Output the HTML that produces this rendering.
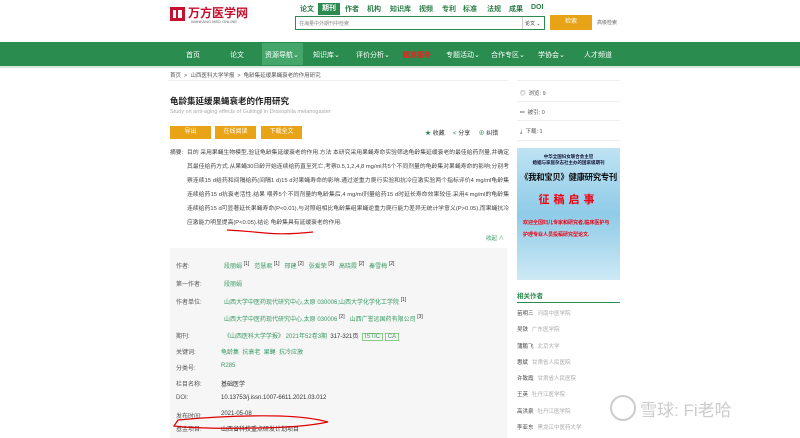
<!DOCTYPE html><html><head><meta charset="utf-8"><style>
*{margin:0;padding:0;box-sizing:border-box}
body{width:800px;height:431px;overflow:hidden;background:#fff;font-family:"Liberation Sans","Noto Sans CJK SC",sans-serif;font-size:6px;color:#333;position:relative}
.a{position:absolute;white-space:nowrap}
.g{color:#3a9a63}
.nav span{position:absolute;top:8px;color:#fff;font-size:7px}
.tab{position:absolute;top:4px;font-size:7px;font-weight:bold;color:#2a7d47}
.btn{position:absolute;top:126px;height:13px;background:#e8a317;color:#fff;font-size:6px;text-align:center;line-height:13px}
.ab{position:absolute;left:187px;width:322px;font-size:5.8px;line-height:14px;color:#444}
.lb{position:absolute;left:176px;color:#555}
.rel div{height:16.3px;line-height:16.3px;font-size:5.5px;color:#444}
.rel span{color:#aaa;margin-left:4px}
</style></head><body>
<div class="a" style="left:170px;top:7px;width:15px;height:14px;background:#c8102e"></div>
<div class="a" style="left:173px;top:10px;width:3px;height:8px;background:#fff"></div>
<div class="a" style="left:178px;top:10px;width:4px;height:8px;background:#fff"></div>
<div class="a" style="left:188px;top:4px;font-size:12px;font-weight:bold;color:#c8102e">万方医学网</div>
<div class="a" style="left:191px;top:19px;font-size:4px;color:#666">WANFANG MED ONLINE</div>
<div class="tab" style="left:300px">论文</div>
<div class="a" style="left:318px;top:3px;width:22px;height:12px;background:#2a8c4f;color:#fff;font-size:7px;font-weight:bold;text-align:center;line-height:12px">期刊</div>
<div class="tab" style="left:345px">作者</div><div class="tab" style="left:367px">机构</div><div class="tab" style="left:390px">知识库</div><div class="tab" style="left:419px">视频</div><div class="tab" style="left:442px">专利</div><div class="tab" style="left:463px">标准</div><div class="tab" style="left:487px">法规</div><div class="tab" style="left:509px">成果</div><div class="tab" style="left:531px">DOI</div>
<div class="a" style="left:295px;top:16px;width:250px;height:14px;border:1px solid #2a8c4f;font-size:5px;color:#888;padding:3px 3px">在海量中外期刊中检索</div>
<div class="a" style="left:522px;top:17px;width:22px;height:12px;border-left:1px solid #ccc;font-size:5px;padding:3px 2px">论文 ⌄</div>
<div class="a" style="left:550px;top:15px;width:42px;height:15px;background:#e8a317;color:#fff;font-size:6px;text-align:center;line-height:15px">检索</div>
<div class="a" style="left:597px;top:19px;font-size:5px;color:#666">高级检索</div>
<div class="a nav" style="left:0;top:42px;width:800px;height:24px;background:#2a8c4f">
<div class="a" style="left:262px;top:1px;width:41px;height:22px;background:#45a66c"></div>
<span style="left:186px">首页</span><span style="left:230px">论文</span><span style="left:265px">资源导航⌄</span><span style="left:313px">知识库⌄</span><span style="left:356px">评价分析⌄</span><span style="left:403px;color:#e8231f;font-weight:bold">精准服务</span><span style="left:446px">专题活动⌄</span><span style="left:491px">合作专区⌄</span><span style="left:538px">学协会⌄</span><span style="left:584px">人才频道</span>
</div>
<div class="a" style="left:0;top:66px;width:800px;height:2px;background:#d8e8dc"></div>
<div class="a" style="left:170px;top:71px;font-size:5.5px;color:#555">首页 &nbsp;&gt;&nbsp; 山西医科大学学报 &nbsp;&gt;&nbsp; 龟龄集延缓果蝇衰老的作用研究</div>
<div class="a" style="left:168px;top:80px;width:340px;height:1px;background:#eee"></div>
<div class="a" style="left:170px;top:95px;font-size:8.5px;font-weight:bold;color:#222">龟龄集延缓果蝇衰老的作用研究</div>
<div class="a" style="left:170px;top:109px;font-size:5.5px;color:#aaa">Study on anti-aging effects of Guilingji in Drosophila melanogaster</div>
<div class="btn" style="left:170px;width:41px">导出</div><div class="btn" style="left:215px;width:41px">在线阅读</div><div class="btn" style="left:261px;width:41px">下载全文</div>
<div class="a" style="left:425px;top:128px;font-size:6px"><span style="color:#2a8c4f">★</span> 收藏 &nbsp;&nbsp;&nbsp; <span style="color:#2a8c4f">&lt;</span> 分享 &nbsp;&nbsp;&nbsp; <span style="color:#2a8c4f">⊕</span> 纠错</div>
<div class="a" style="left:170px;top:147px;font-size:5.8px;color:#444">摘要:</div>
<div class="ab" style="top:146px;white-space:normal;text-align:justify">目的 采用果蝇生物模型,验证龟龄集延缓衰老的作用.方法 本研究采用果蝇寿命实验筛选龟龄集延缓衰老的最佳给药剂量,并确定其最佳给药方式.从果蝇30日龄开始连续给药直至死亡,考察0.5,1,2,4,8 mg/ml共5个不同剂量的龟龄集对果蝇寿命的影响;分别考察连续15 d给药和间隔给药(间隔1 d)15 d对果蝇寿命的影响.通过逆重力爬行实验和抗冷应激实验两个指标评价4 mg/ml龟龄集连续给药15 d抗衰老活性.结果 喂养5个不同剂量的龟龄集后,4 mg/ml剂量给药15 d时延长寿命效果较佳.采用4 mg/ml的龟龄集连续给药15 d可显著延长果蝇寿命(P&lt;0.01),与对照组相比龟龄集组果蝇逆重力爬行能力差异无统计学意义(P&gt;0.05),而果蝇抗冷应激能力明显提高(P&lt;0.05).结论 龟龄集具有延缓衰老的作用.</div>
<svg class="a" style="left:225px;top:228px" width="90" height="8"><path d="M2 2 Q20 3 40 5 T88 4" stroke="#d00" stroke-width="1.2" fill="none"/></svg>
<div class="a" style="left:486px;top:234px;font-size:5.5px;color:#3a9a63">收起 ∧</div>
<div class="a" style="left:170px;top:248px;width:337px;height:190px;background:#f6f6f6"></div>
<div class="lb" style="top:261px">作者:</div>
<div class="a g" style="left:224px;top:261px">段丽娟 <sup style="color:#333">[1]</sup> &nbsp; 范慧君 <sup style="color:#333">[1]</sup> &nbsp; 邢建 <sup style="color:#333">[2]</sup> &nbsp; 张爱荣 <sup style="color:#333">[3]</sup> &nbsp; 高晓霞 <sup style="color:#333">[2]</sup> &nbsp; 秦雪梅 <sup style="color:#333">[2]</sup></div>
<div class="lb" style="top:279px">第一作者:</div><div class="a g" style="left:224px;top:279px">段丽娟</div>
<div class="lb" style="top:297px">作者单位:</div>
<div class="a g" style="left:224px;top:297px">山西大学中医药现代研究中心,太原 030006;山西大学化学化工学院 <sup style="color:#333">[1]</sup></div>
<div class="a g" style="left:224px;top:314px">山西大学中医药现代研究中心,太原 030006 <sup style="color:#333">[2]</sup> &nbsp; 山西广誉远国药有限公司 <sup style="color:#333">[3]</sup></div>
<div class="lb" style="top:331px">期刊:</div>
<div class="a" style="left:224px;top:331px"><span class="g">《山西医科大学学报》 2021年52卷3期</span> &nbsp;317-321页 &nbsp;<span class="g" style="border:1px solid #8c8;padding:0 2px">ISTIC</span> <span class="g" style="border:1px solid #8c8;padding:0 2px">CA</span></div>
<div class="lb" style="top:347px">关键词:</div><div class="a g" style="left:221px;top:347px">龟龄集 &nbsp;抗衰老 &nbsp;果蝇 &nbsp;抗冷应激</div>
<div class="lb" style="top:363px">分类号:</div><div class="a g" style="left:221px;top:363px">R285</div>
<div class="lb" style="top:379px">栏目名称:</div><div class="a" style="left:221px;top:379px">基础医学</div>
<div class="lb" style="top:395px">DOI:</div><div class="a" style="left:221px;top:395px">10.13753/j.issn.1007-6611.2021.03.012</div>
<div class="lb" style="top:411px">发布时间:</div><div class="a" style="left:221px;top:411px">2021-05-08</div>
<div class="lb" style="top:424px">基金项目:</div><div class="a" style="left:221px;top:424px">山西省科技重点研发计划项目</div>
<svg class="a" style="left:170px;top:414px" width="160" height="17"><path d="M8 6 Q60 1 110 2 Q140 3 158 8 Q130 14 80 14 Q30 15 4 12 Z" stroke="#d00" stroke-width="1.2" fill="none"/></svg>
<div class="a" style="left:517px;top:80px;width:103px;height:1px;background:#eee"></div>
<div class="a" style="left:520px;top:89px;font-size:5.5px;color:#555">◎ &nbsp;浏览: 9</div>
<div class="a" style="left:517px;top:101px;width:103px;height:1px;background:#eee"></div>
<div class="a" style="left:520px;top:108px;font-size:5.5px;color:#555">⚯ &nbsp;被引: 0</div>
<div class="a" style="left:517px;top:120px;width:103px;height:1px;background:#eee"></div>
<div class="a" style="left:520px;top:127px;font-size:5.5px;color:#555">⤓ &nbsp;下载: 1</div>
<div class="a" style="left:517px;top:140px;width:103px;height:1px;background:#eee"></div>
<div class="a" style="left:517px;top:148px;width:103px;height:132px;background:linear-gradient(180deg,#bfe3f3,#8fcbe8 50%,#cde9f5);text-align:center;overflow:hidden">
<div style="font-size:4.5px;color:#113;margin-top:6px;line-height:6px;font-weight:bold">中华全国妇女联合会主管<br>婚姻与家庭杂志社主办的国家级期刊</div>
<div style="font-size:8.4px;color:#111;font-weight:bold;margin-top:5px;letter-spacing:-0.3px">《我和宝贝》健康研究专刊</div>
<div style="font-size:11px;color:#e01;font-weight:bold;margin-top:8px;letter-spacing:4px">征稿启事</div>
<div style="font-size:5px;color:#e01;font-weight:bold;margin-top:10px;line-height:12px;text-align:left;padding-left:6px">欢迎全国妇儿专家和研究者,临床医护与<br>护理专业人员投稿研究型论文.</div>
</div>
<div class="a" style="left:517px;top:290px;font-size:6.5px;font-weight:bold;color:#2a8c4f">相关作者</div>
<div class="a" style="left:517px;top:302px;width:103px;height:1px;background:#2a8c4f"></div>
<div class="a rel" style="left:517px;top:306px">
<div>苗明三<span>河南中医学院</span></div><div>吴铁<span>广东医学院</span></div><div>蒲鹏飞<span>北京大学</span></div><div>惠斌<span>甘肃省人民医院</span></div><div>许致霞<span>甘肃省人民医院</span></div><div>王英<span>牡丹江医学院</span></div><div>高洪泉<span>牡丹江医学院</span></div><div>李亚东<span>黑龙江中医药大学</span></div>
</div>
<div class="a" style="left:610px;top:395px;width:26px;height:26px;border:2px solid #ccc;border-radius:50%"></div>
<div class="a" style="left:640px;top:396px;font-size:17px;color:#ccc">雪球: Fi老哈</div>
</body></html>
